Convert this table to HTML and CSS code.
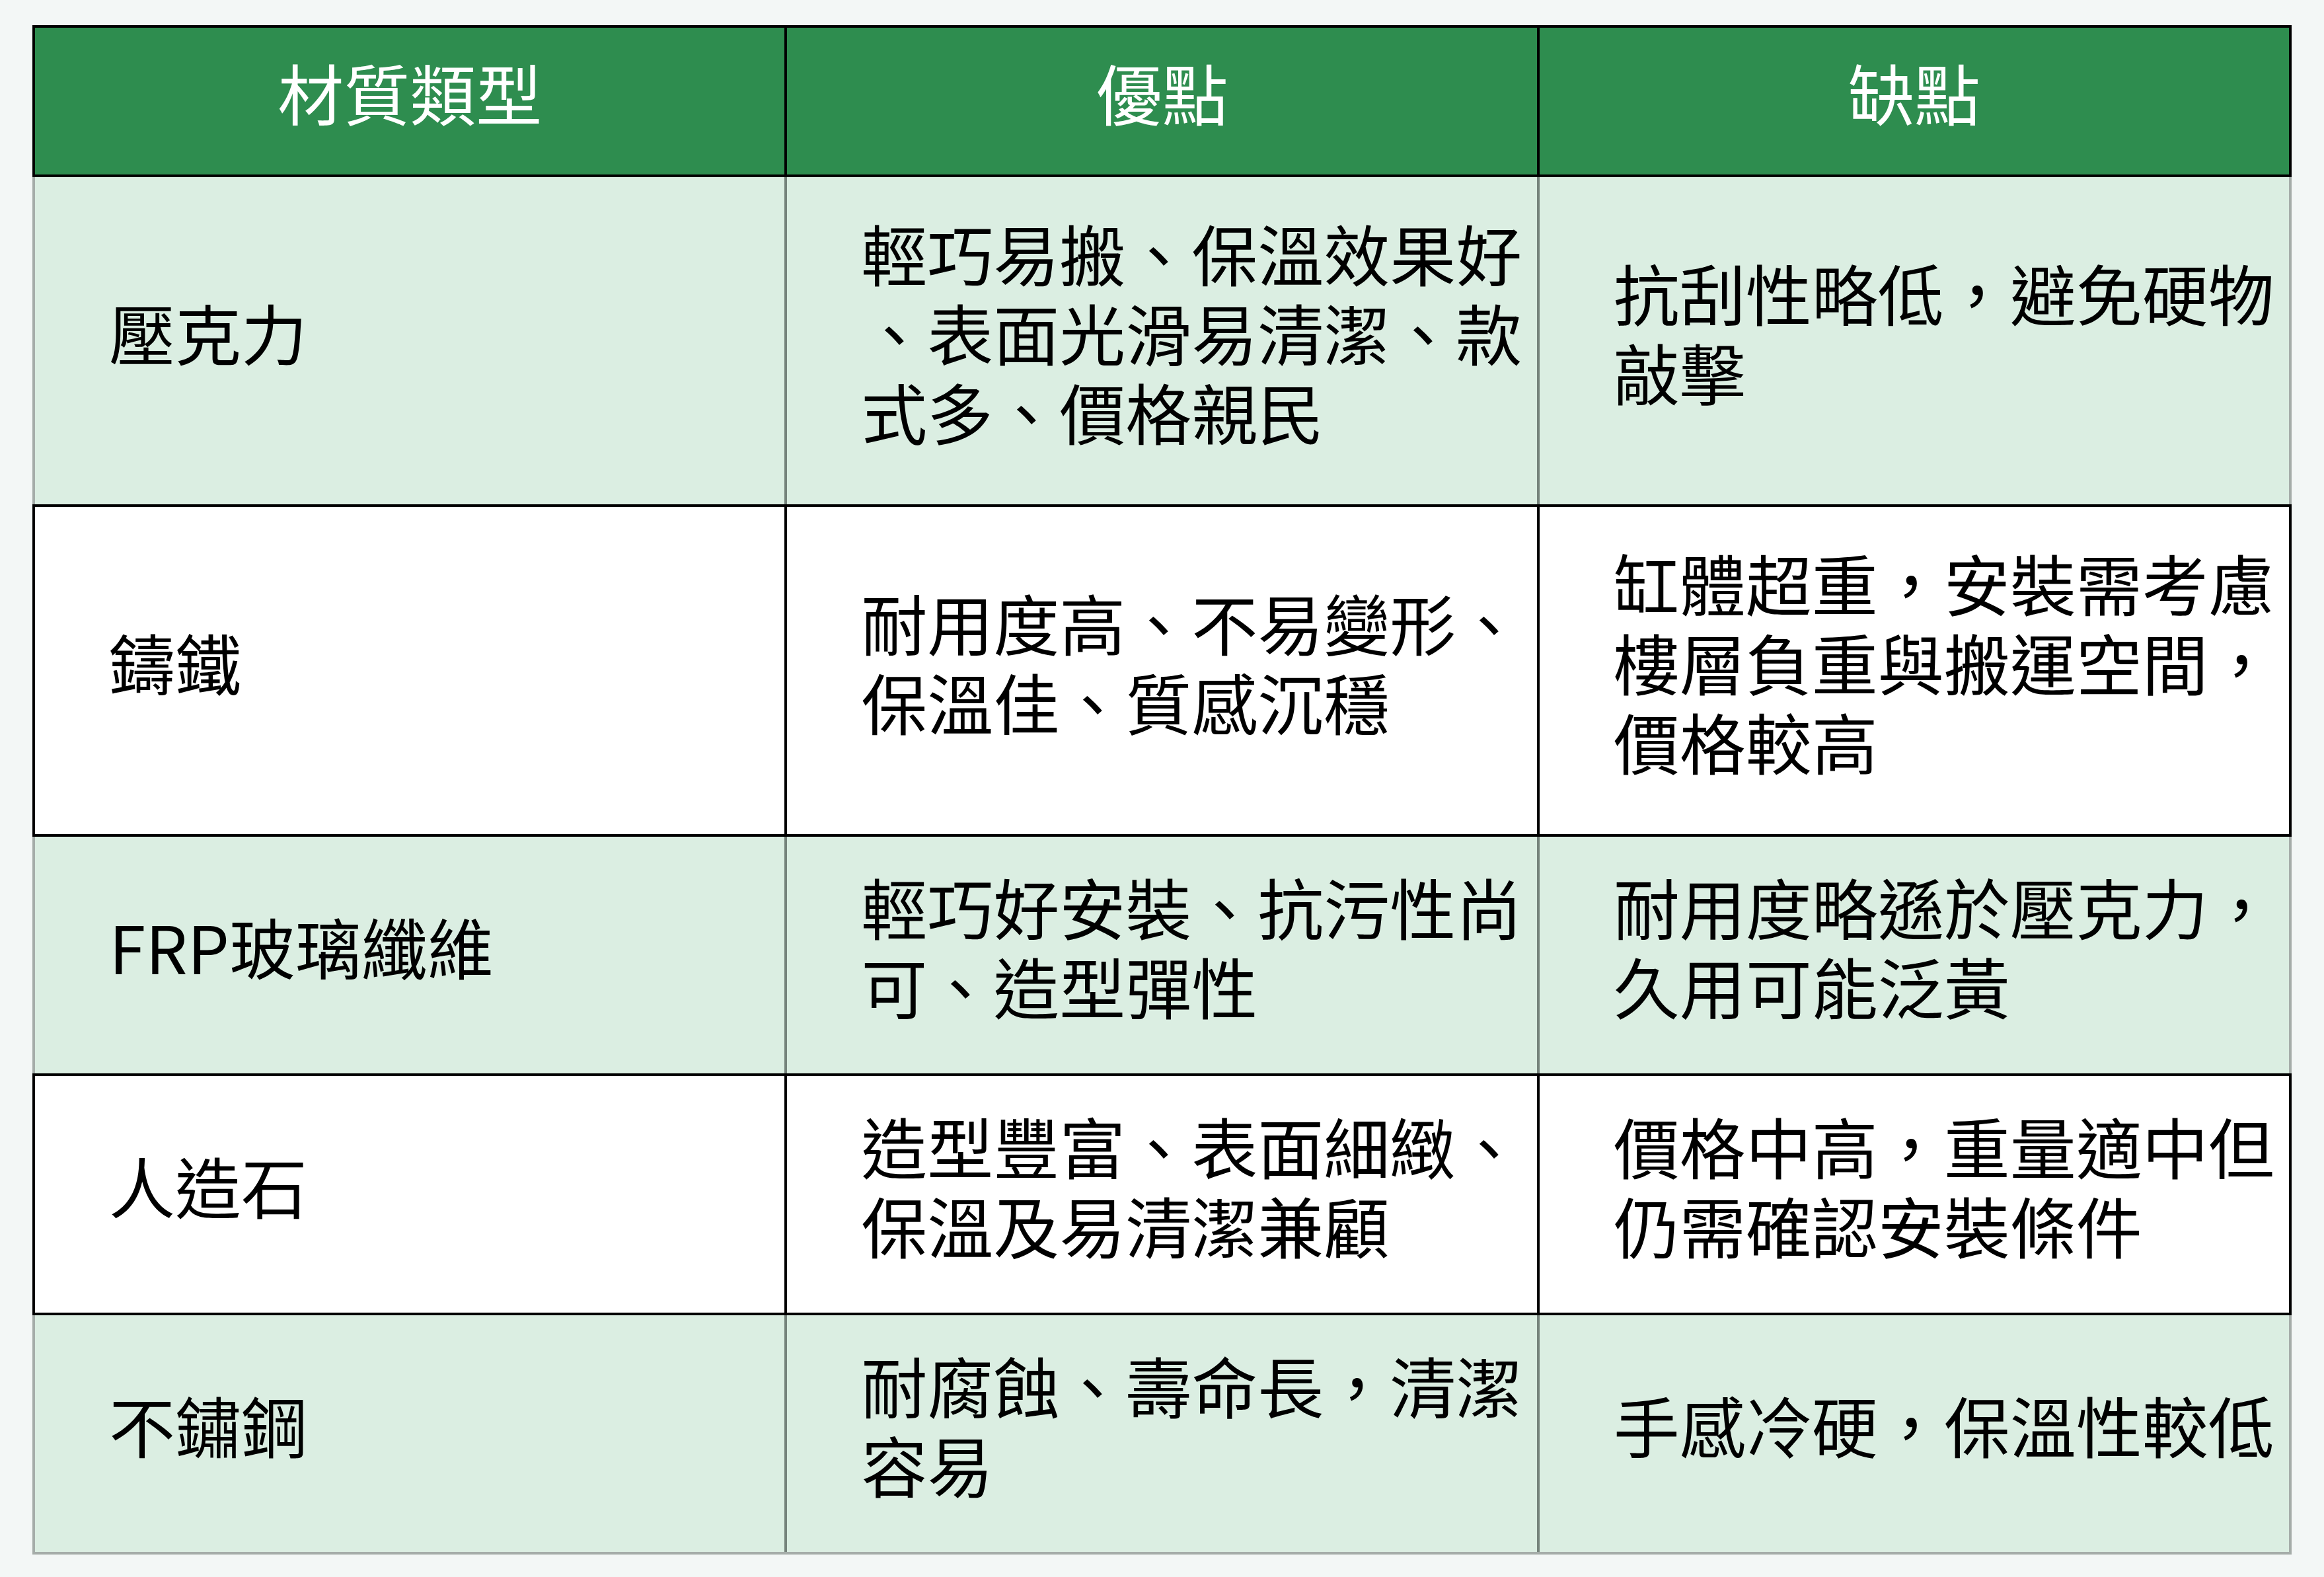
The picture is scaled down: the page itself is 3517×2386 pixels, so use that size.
FILE: index.html
```html
<!DOCTYPE html>
<html lang="zh-Hant">
<head>
<meta charset="utf-8">
<title>浴缸材質比較</title>
<link rel="stylesheet" href="styles.css">
</head>
<body>
<main class="page">
  <table class="compare">
    <colgroup><col class="col"><col class="col"><col class="col"></colgroup>
    <thead>
      <tr class="head-row">
        <th>材質類型</th>
        <th>優點</th>
        <th>缺點</th>
      </tr>
    </thead>
    <tbody>
      <tr class="row tinted tall">
        <td>壓克力</td>
        <td>輕巧易搬、保溫效果好、表面光滑易清潔、款式多、價格親民</td>
        <td>抗刮性略低，避免硬物敲擊</td>
      </tr>
      <tr class="row plain tall">
        <td>鑄鐵</td>
        <td>耐用度高、不易變形、保溫佳、質感沉穩</td>
        <td>缸體超重，安裝需考慮樓層負重與搬運空間，價格較高</td>
      </tr>
      <tr class="row tinted short">
        <td>FRP玻璃纖維</td>
        <td>輕巧好安裝、抗污性尚可、造型彈性</td>
        <td>耐用度略遜於壓克力，久用可能泛黃</td>
      </tr>
      <tr class="row plain short">
        <td>人造石</td>
        <td>造型豐富、表面細緻、保溫及易清潔兼顧</td>
        <td>價格中高，重量適中但仍需確認安裝條件</td>
      </tr>
      <tr class="row tinted short last">
        <td>不鏽鋼</td>
        <td>耐腐蝕、壽命長，清潔容易</td>
        <td>手感冷硬，保溫性較低</td>
      </tr>
    </tbody>
  </table>
</main>
</body>
</html>
```

FILE: styles.css
```css
html, body {
  margin: 0;
  padding: 0;
  background: #f3f7f6;
}

.page {
  padding: 38px 49px 0 49px;
}

.compare {
  width: 100%;
  table-layout: fixed;
  border-collapse: collapse;
  font-family: "Noto Sans CJK TC", "Noto Sans", sans-serif;
  font-size: 100px;
  line-height: 120px;
  color: #000;
}

.col {
  width: 33.333%;
}

.head-row {
  height: 226px;
}

.head-row th {
  background: #2e8d4f;
  color: #fff;
  font-weight: 400;
  text-align: center;
  vertical-align: middle;
  border: 4px solid #000;
  padding: 0 0 28px 0;
}

.row td {
  text-align: left;
  vertical-align: middle;
  padding: 0 10px 28px 112px;
  line-break: anywhere;
}

.tall {
  height: 499px;
}

.short {
  height: 362px;
}

.plain td {
  background: #ffffff;
  border: 4px solid #000;
}

.tinted td {
  background: #dbeee2;
  border-top: 4px solid #000;
  border-bottom: 4px solid #000;
  border-left: 4px solid #75837b;
  border-right: 4px solid #75837b;
}

.tinted td:first-child {
  border-left-color: #a5ada9;
}

.tinted td:last-child {
  border-right-color: #a5ada9;
}

.last td {
  border-bottom-color: #a5ada9;
}
```
